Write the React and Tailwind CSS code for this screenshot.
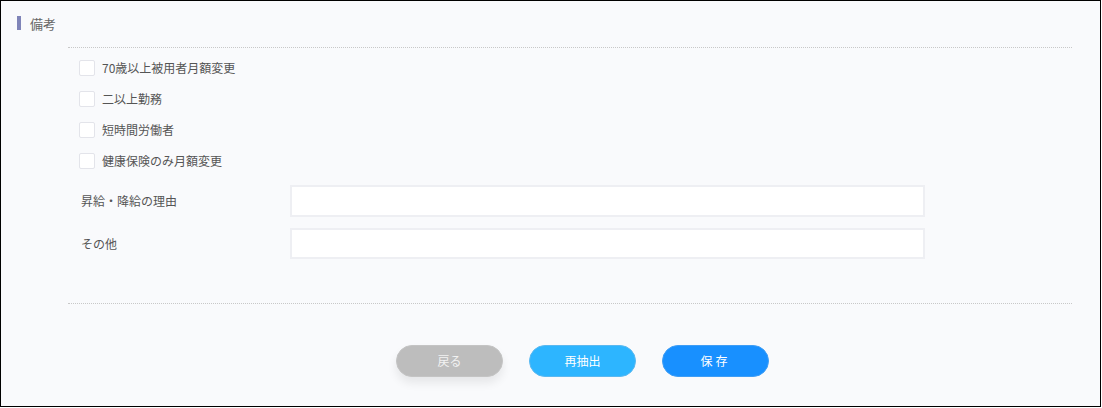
export default function App() {
  const font = { fontFamily: '"Noto Sans CJK JP", "Noto Sans", sans-serif' };
  const checks = ["70歳以上被用者月額変更", "二以上勤務", "短時間労働者", "健康保険のみ月額変更"];
  return (
    <div className="w-[1102px] h-[408px] bg-white" style={font}>
      <div className="w-[1101px] h-[407px] border border-black bg-[#f9fafc] flex flex-col">
        <div className="flex items-center h-[14px] mt-[15px] ml-[16px]">
          <div className="w-[4px] h-[14px] bg-[#7f84b8]" />
          <span className="ml-[9px] text-[13px] leading-none text-[#666]">備考</span>
        </div>
        <div className="ml-[67px] w-[1004px] mt-[17px] border-t border-dotted border-[#c8c8c8]" />
        <div className="ml-[78px] mt-[12px] flex flex-col gap-[15px]">
          {checks.map((c) => (
            <div key={c} className="flex items-center h-[16px]">
              <div className="w-[16px] h-[16px] bg-white border border-[#e3e4ea] rounded-[2px]" />
              <span className="ml-[7px] text-[12px] leading-none text-[#555]">{c}</span>
            </div>
          ))}
        </div>
        <div className="ml-[80px] mt-[16px] flex flex-col gap-[11px]">
          <div className="flex items-center h-[32px]">
            <span className="w-[209px] text-[12px] text-[#555]">昇給・降給の理由</span>
            <div className="w-[635px] h-[32px] bg-white border-2 border-[#eeeff3]" />
          </div>
          <div className="flex items-center h-[31px]">
            <span className="w-[209px] text-[12px] text-[#555]">その他</span>
            <div className="w-[635px] h-[31px] bg-white border-2 border-[#eeeff3]" />
          </div>
        </div>
        <div className="ml-[67px] w-[1004px] mt-[44px] border-t border-dotted border-[#c8c8c8]" />
        <div className="ml-[395px] mt-[41px] flex gap-[26px]">
          <button className="w-[107px] h-[32px] rounded-full bg-[#bdbdbd] border border-[#c4c4c4] text-[12px] text-[#f2f2f2] shadow-[0_6px_10px_rgba(0,0,0,0.08)]">戻る</button>
          <button className="w-[107px] h-[32px] rounded-full bg-[#2db5ff] border border-[#5ab8f0] text-[12px] text-white">再抽出</button>
          <button className="w-[107px] h-[32px] rounded-full bg-[#1890ff] border border-[#3e9df5] text-[12px] text-white tracking-[3px]">保存</button>
        </div>
      </div>
    </div>
  );
}
